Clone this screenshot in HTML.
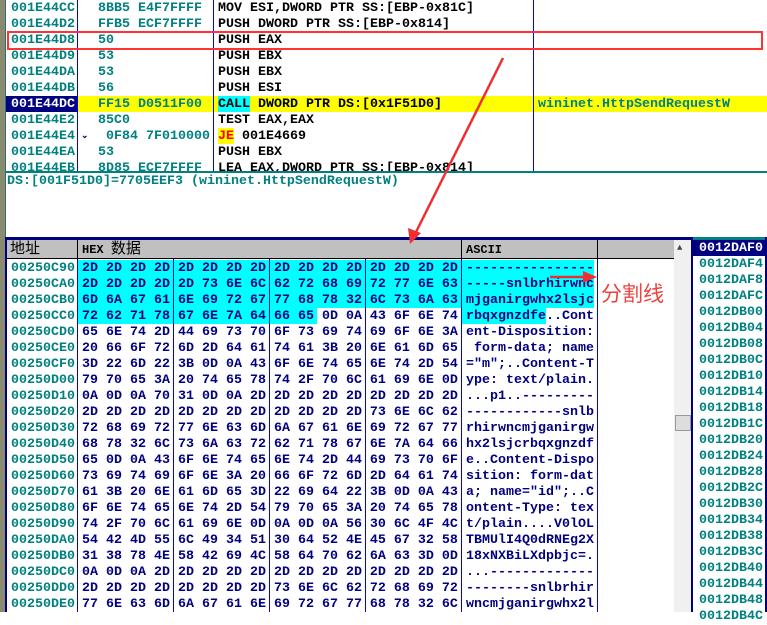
<!DOCTYPE html>
<html><head><meta charset="utf-8"><style>
body{margin:0;width:767px;height:612px;overflow:hidden;background:#fff;position:relative;font-family:"Liberation Mono",monospace;font-weight:bold;font-size:13.333px;}
.a{position:absolute;white-space:pre;line-height:16px;}
.t{color:#008080}.n{color:#000080}.k{color:#000}
.b{position:absolute}
</style></head><body>
<div class="b" style="left:0;top:0;width:5px;height:612px;background:#8a8a70"></div>
<div class="b" style="left:5px;top:0;width:1px;height:237px;background:#2f6f6f"></div>
<div class="b" style="left:77px;top:0;width:1px;height:171px;background:#0000ff"></div>
<div class="b" style="left:213px;top:0;width:1px;height:171px;background:#0000ff"></div>
<div class="b" style="left:533px;top:0;width:1px;height:171px;background:#0000ff"></div>
<div class="b" style="left:78px;top:96px;width:689px;height:16px;background:#ffff00"></div>
<div class="b" style="left:6px;top:96px;width:71px;height:16px;background:#000080"></div>
<div class="b" style="left:218px;top:96px;width:32px;height:16px;background:#00ffff"></div>
<div class="b" style="left:218px;top:128px;width:16px;height:16px;background:#ffff00"></div>
<div class="b" style="left:533px;top:96px;width:1px;height:16px;background:#0000ff"></div>
<div class="b" style="left:213px;top:96px;width:1px;height:16px;background:#0000ff"></div>
<div class="b" style="left:77px;top:96px;width:1px;height:16px;background:#0000ff"></div>
<div class="a t" style="left:11px;top:1px">001E44CC
001E44D2
001E44D8
001E44D9
001E44DA
001E44DB
<span style="color:#fff">001E44DC</span>
001E44E2
001E44E4
001E44EA
001E44EB</div>
<div class="a t" style="left:98px;top:1px">8BB5 E4F7FFFF
FFB5 ECF7FFFF
50
53
53
56
FF15 D0511F00
85C0
 0F84 7F010000
53
8D85 ECF7FFFF</div>
<div class="a n" style="left:81px;top:131px;font-size:9px;line-height:10px">&#8964;</div>
<div class="a k" style="left:218px;top:1px">MOV ESI,DWORD PTR SS:[EBP-0x81C]
PUSH DWORD PTR SS:[EBP-0x814]
PUSH EAX
PUSH EBX
PUSH EBX
PUSH ESI
CALL DWORD PTR DS:[0x1F51D0]
TEST EAX,EAX
<span style="color:#f00">JE</span> 001E4669
PUSH EBX
LEA EAX,DWORD PTR SS:[EBP-0x814]</div>
<div class="a t" style="left:538px;top:97px">wininet.HttpSendRequestW</div>
<div class="b" style="left:7px;top:31px;width:752px;height:15px;border:2px solid #f33"></div>
<div class="b" style="left:6px;top:171px;width:761px;height:66px;background:#fff"></div>
<div class="b" style="left:5px;top:171px;width:762px;height:2px;background:#008080"></div>
<div class="a t" style="left:7px;top:174px">DS:[001F51D0]=7705EEF3 (wininet.HttpSendRequestW)</div>
<div class="b" style="left:5px;top:237px;width:687px;height:3px;background:#000080"></div>
<div class="b" style="left:5px;top:237px;width:2px;height:375px;background:#000080"></div>
<div class="b" style="left:7px;top:240px;width:667px;height:18px;background:#c0c0c0;border-bottom:1px solid #000"></div>
<div class="b" style="left:77px;top:240px;width:1px;height:19px;background:#000"></div>
<div class="b" style="left:461px;top:240px;width:1px;height:19px;background:#000"></div>
<div class="b" style="left:597px;top:240px;width:1px;height:19px;background:#000"></div>
<div class="a k" style="left:10px;top:241px;font-family:'Liberation Sans','Noto Sans CJK SC',sans-serif;font-weight:normal;font-size:15px">地址</div>
<div class="a k" style="left:82px;top:241px;font-size:12px">HEX <span style="font-family:'Liberation Sans','Noto Sans CJK SC',sans-serif;font-weight:normal;font-size:15px">数据</span></div>
<div class="a k" style="left:466px;top:242px;font-size:12px">ASCII</div>
<div class="b" style="left:78px;top:260px;width:383px;height:48px;background:#00ffff"></div>
<div class="b" style="left:78px;top:308px;width:239px;height:16px;background:#00ffff"></div>
<div class="b" style="left:462px;top:260px;width:132px;height:48px;background:#00ffff"></div>
<div class="b" style="left:462px;top:308px;width:84px;height:16px;background:#00ffff"></div>
<div class="b" style="left:77px;top:259px;width:1px;height:353px;background:#0000ff"></div>
<div class="b" style="left:173px;top:259px;width:1px;height:353px;background:#0000ff"></div>
<div class="b" style="left:269px;top:259px;width:1px;height:353px;background:#0000ff"></div>
<div class="b" style="left:365px;top:259px;width:1px;height:353px;background:#0000ff"></div>
<div class="b" style="left:461px;top:259px;width:1px;height:353px;background:#0000ff"></div>
<div class="b" style="left:597px;top:259px;width:1px;height:353px;background:#0000ff"></div>
<div class="a t" style="left:11px;top:261px">00250C90
00250CA0
00250CB0
00250CC0
00250CD0
00250CE0
00250CF0
00250D00
00250D10
00250D20
00250D30
00250D40
00250D50
00250D60
00250D70
00250D80
00250D90
00250DA0
00250DB0
00250DC0
00250DD0
00250DE0</div>
<div class="a n" style="left:82px;top:261px">2D 2D 2D 2D 2D 2D 2D 2D 2D 2D 2D 2D 2D 2D 2D 2D
2D 2D 2D 2D 2D 73 6E 6C 62 72 68 69 72 77 6E 63
6D 6A 67 61 6E 69 72 67 77 68 78 32 6C 73 6A 63
72 62 71 78 67 6E 7A 64 66 65 0D 0A 43 6F 6E 74
65 6E 74 2D 44 69 73 70 6F 73 69 74 69 6F 6E 3A
20 66 6F 72 6D 2D 64 61 74 61 3B 20 6E 61 6D 65
3D 22 6D 22 3B 0D 0A 43 6F 6E 74 65 6E 74 2D 54
79 70 65 3A 20 74 65 78 74 2F 70 6C 61 69 6E 0D
0A 0D 0A 70 31 0D 0A 2D 2D 2D 2D 2D 2D 2D 2D 2D
2D 2D 2D 2D 2D 2D 2D 2D 2D 2D 2D 2D 73 6E 6C 62
72 68 69 72 77 6E 63 6D 6A 67 61 6E 69 72 67 77
68 78 32 6C 73 6A 63 72 62 71 78 67 6E 7A 64 66
65 0D 0A 43 6F 6E 74 65 6E 74 2D 44 69 73 70 6F
73 69 74 69 6F 6E 3A 20 66 6F 72 6D 2D 64 61 74
61 3B 20 6E 61 6D 65 3D 22 69 64 22 3B 0D 0A 43
6F 6E 74 65 6E 74 2D 54 79 70 65 3A 20 74 65 78
74 2F 70 6C 61 69 6E 0D 0A 0D 0A 56 30 6C 4F 4C
54 42 4D 55 6C 49 34 51 30 64 52 4E 45 67 32 58
31 38 78 4E 58 42 69 4C 58 64 70 62 6A 63 3D 0D
0A 0D 0A 2D 2D 2D 2D 2D 2D 2D 2D 2D 2D 2D 2D 2D
2D 2D 2D 2D 2D 2D 2D 2D 73 6E 6C 62 72 68 69 72
77 6E 63 6D 6A 67 61 6E 69 72 67 77 68 78 32 6C</div>
<div class="a n" style="left:466px;top:261px">----------------
-----snlbrhirwnc
mjganirgwhx2lsjc
rbqxgnzdfe..Cont
ent-Disposition:
 form-data; name
="m";..Content-T
ype: text/plain.
...p1..---------
------------snlb
rhirwncmjganirgw
hx2lsjcrbqxgnzdf
e..Content-Dispo
sition: form-dat
a; name="id";..C
ontent-Type: tex
t/plain....V0lOL
TBMUlI4Q0dRNEg2X
18xNXBiLXdpbjc=.
...-------------
--------snlbrhir
wncmjganirgwhx2l</div>
<div class="b" style="left:674px;top:240px;width:17px;height:372px;background:#f0f0f0"></div>
<div class="a k" style="left:677px;top:240px;font-size:9px;color:#444">&#9650;</div>
<div class="b" style="left:675px;top:415px;width:14px;height:14px;background:#ddd;border:1px solid #999"></div>
<div class="b" style="left:691px;top:237px;width:2px;height:375px;background:#000080"></div>
<div class="b" style="left:765px;top:237px;width:2px;height:375px;background:#000080"></div>
<div class="b" style="left:693px;top:237px;width:72px;height:3px;background:#008080"></div>
<div class="b" style="left:693px;top:240px;width:72px;height:16px;background:#000080"></div>
<div class="a t" style="left:699px;top:241px"><span style="color:#fff">0012DAF0</span>
0012DAF4
0012DAF8
0012DAFC
0012DB00
0012DB04
0012DB08
0012DB0C
0012DB10
0012DB14
0012DB18
0012DB1C
0012DB20
0012DB24
0012DB28
0012DB2C
0012DB30
0012DB34
0012DB38
0012DB3C
0012DB40
0012DB44
0012DB48
0012DB4C</div>
<svg class="b" style="left:0;top:0" width="767" height="612">
<line x1="503" y1="58" x2="414" y2="236" stroke="#f03030" stroke-width="2.5"/>
<polygon points="410,244 408,228 421,233" fill="#f03030"/>
<line x1="550" y1="277" x2="585" y2="277" stroke="#f03030" stroke-width="2.5"/>
<polygon points="597,277 583,271 583,283" fill="#f03030"/>
</svg>
<div class="a" style="left:601px;top:283px;color:#f04040;font-family:'Liberation Sans','Noto Sans CJK SC',sans-serif;font-weight:normal;font-size:21px;line-height:24px">分割线</div>
</body></html>
